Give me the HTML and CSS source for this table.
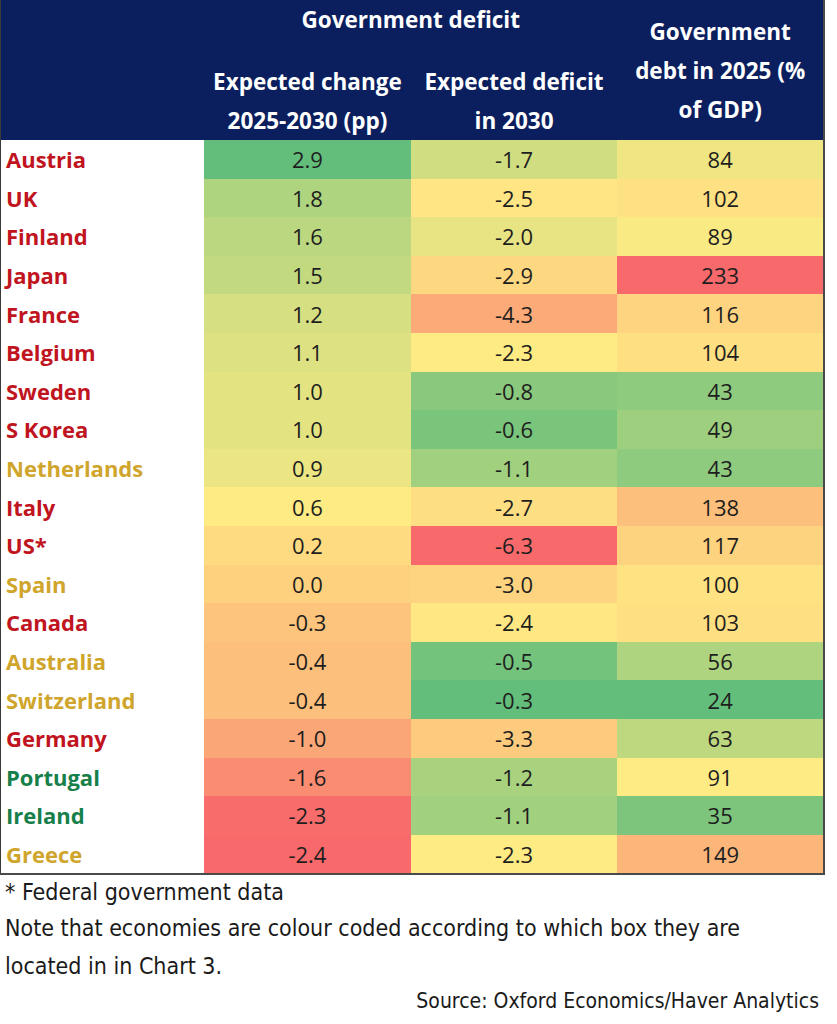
FILE: index.html
```html
<!DOCTYPE html>
<html lang="en">
<head>
<meta charset="utf-8">
<title>Government deficit and debt</title>
<link rel="stylesheet" href="styles.css">
</head>
<body>
<table class="heat">
  <colgroup>
    <col class="c-label"><col class="c-num"><col class="c-num"><col class="c-num3">
  </colgroup>
  <thead>
    <tr class="h1">
      <th class="blank" rowspan="2"></th>
      <th colspan="2" class="group">Government deficit</th>
      <th rowspan="2" class="debt">Government debt in 2025 (% of GDP)</th>
    </tr>
    <tr class="h2">
      <th class="sub">Expected change 2025-2030 (pp)</th>
      <th class="sub">Expected deficit in 2030</th>
    </tr>
  </thead>
  <tbody>
    <tr><td class="lab red">Austria</td><td style="background:rgb(99,190,123)">2.9</td><td style="background:rgb(208,222,129)">-1.7</td><td style="background:rgb(239,230,131)">84</td></tr>
    <tr><td class="lab red">UK</td><td style="background:rgb(174,212,127)">1.8</td><td style="background:rgb(255,229,131)">-2.5</td><td style="background:rgb(254,225,130)">102</td></tr>
    <tr><td class="lab red">Finland</td><td style="background:rgb(187,215,128)">1.6</td><td style="background:rgb(232,228,131)">-2.0</td><td style="background:rgb(250,234,132)">89</td></tr>
    <tr><td class="lab red">Japan</td><td style="background:rgb(194,217,128)">1.5</td><td style="background:rgb(254,216,128)">-2.9</td><td style="background:rgb(248,105,107)">233</td></tr>
    <tr><td class="lab red">France</td><td style="background:rgb(214,223,130)">1.2</td><td style="background:rgb(252,170,120)">-4.3</td><td style="background:rgb(254,212,128)">116</td></tr>
    <tr><td class="lab red">Belgium</td><td style="background:rgb(221,225,130)">1.1</td><td style="background:rgb(255,235,132)">-2.3</td><td style="background:rgb(254,223,130)">104</td></tr>
    <tr><td class="lab red">Sweden</td><td style="background:rgb(228,227,130)">1.0</td><td style="background:rgb(138,201,125)">-0.8</td><td style="background:rgb(143,203,126)">43</td></tr>
    <tr><td class="lab red">S Korea</td><td style="background:rgb(228,227,130)">1.0</td><td style="background:rgb(122,197,124)">-0.6</td><td style="background:rgb(157,207,126)">49</td></tr>
    <tr><td class="lab gold">Netherlands</td><td style="background:rgb(235,229,131)">0.9</td><td style="background:rgb(161,208,127)">-1.1</td><td style="background:rgb(143,203,126)">43</td></tr>
    <tr><td class="lab red">Italy</td><td style="background:rgb(255,235,132)">0.6</td><td style="background:rgb(254,222,130)">-2.7</td><td style="background:rgb(253,192,124)">138</td></tr>
    <tr><td class="lab red">US*</td><td style="background:rgb(254,218,129)">0.2</td><td style="background:rgb(248,105,107)">-6.3</td><td style="background:rgb(254,211,127)">117</td></tr>
    <tr><td class="lab gold">Spain</td><td style="background:rgb(254,209,127)">0.0</td><td style="background:rgb(254,212,128)">-3.0</td><td style="background:rgb(255,227,130)">100</td></tr>
    <tr><td class="lab red">Canada</td><td style="background:rgb(253,196,125)">-0.3</td><td style="background:rgb(255,232,131)">-2.4</td><td style="background:rgb(254,224,130)">103</td></tr>
    <tr><td class="lab gold">Australia</td><td style="background:rgb(253,192,124)">-0.4</td><td style="background:rgb(115,195,124)">-0.5</td><td style="background:rgb(174,212,127)">56</td></tr>
    <tr><td class="lab gold">Switzerland</td><td style="background:rgb(253,192,124)">-0.4</td><td style="background:rgb(99,190,123)">-0.3</td><td style="background:rgb(99,190,123)">24</td></tr>
    <tr><td class="lab red">Germany</td><td style="background:rgb(251,166,119)">-1.0</td><td style="background:rgb(253,203,126)">-3.3</td><td style="background:rgb(190,216,128)">63</td></tr>
    <tr><td class="lab green">Portugal</td><td style="background:rgb(250,140,114)">-1.6</td><td style="background:rgb(169,210,127)">-1.2</td><td style="background:rgb(255,235,132)">91</td></tr>
    <tr><td class="lab green">Ireland</td><td style="background:rgb(248,109,108)">-2.3</td><td style="background:rgb(161,208,127)">-1.1</td><td style="background:rgb(125,197,125)">35</td></tr>
    <tr><td class="lab gold">Greece</td><td style="background:rgb(248,105,107)">-2.4</td><td style="background:rgb(255,235,132)">-2.3</td><td style="background:rgb(252,182,122)">149</td></tr>
  </tbody>
</table>
<div class="notes">
  <p class="fed">* Federal government data</p>
  <p class="note">Note that economies are colour coded according to which box they are located in in Chart 3.</p>
  <p class="source">Source: Oxford Economics/Haver Analytics</p>
</div>
</body>
</html>
```
FILE: styles.css
```css
html, body {
  margin: 0;
  padding: 0;
  background: #ffffff;
}

.heat {
  border-collapse: collapse;
  table-layout: fixed;
  width: 825px;
  font-family: "Open Sans", "Noto Sans", sans-serif;
  border-left: 1px solid #3a3a3a;
  border-right: 2px solid #4a4a4a;
  border-bottom: 2px solid #4a4a4a;
}

.c-label { width: 203px; }
.c-num { width: 206px; }
.c-num3 { width: 206px; }

.heat thead th {
  background: #0b1f5e;
  color: #ffffff;
  font-weight: 700;
  font-size: 22.5px;
  padding: 0;
}

.h1 { height: 42px; }
.h2 { height: 98px; }

.group {
  vertical-align: top;
  line-height: 40px;
}

.sub {
  vertical-align: bottom;
  line-height: 39px;
  padding: 0 2px 0 !important;
}

.debt {
  vertical-align: middle;
  line-height: 39px;
  padding: 0 10px 0 !important;
}

.heat tbody td {
  height: 38.6px;
  padding: 0;
  text-align: center;
  font-size: 22px;
  color: #1e1e1e;
  line-height: 26px;
}

.heat tbody td.lab {
  text-align: left;
  padding-left: 5px;
  font-weight: 700;
  background: #ffffff;
}

.red { color: #c0141e !important; }
.gold { color: #cfa52c !important; }
.green { color: #17804a !important; }

.notes {
  padding-left: 5px;
  width: 814px;
  font-family: "Liberation Sans Narrow", "DejaVu Sans Condensed", "Liberation Sans", sans-serif;
  color: #1a1a1a;
}

.notes p { margin: 0; }

.fed {
  font-size: 23px;
  line-height: 34px;
}

.note {
  font-size: 23px;
  line-height: 38px;
  width: 770px;
}

.source {
  text-align: right;
  font-size: 21px;
  line-height: 32px;
}
```
